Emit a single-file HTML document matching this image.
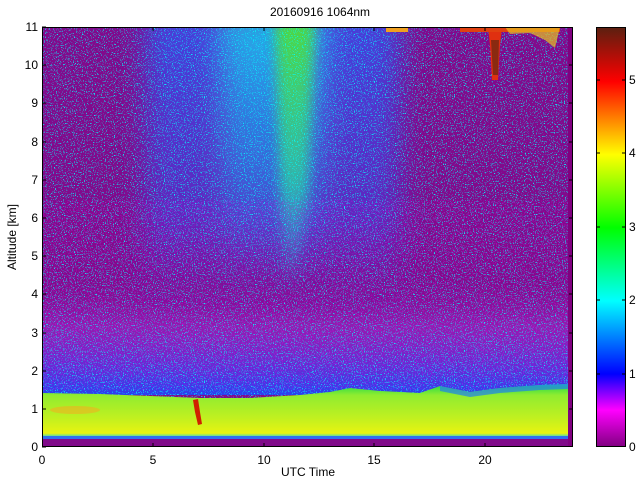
<!DOCTYPE html>
<html><head><style>
body{margin:0;background:#fff;width:640px;height:480px;overflow:hidden}
svg{display:block}
text{font-family:"Liberation Sans",sans-serif;font-size:12px;fill:#000}
</style></head><body>
<svg width="640" height="480" viewBox="0 0 640 480">
<defs>
<filter id="spk" x="0" y="0" width="100%" height="100%">
<feTurbulence type="fractalNoise" baseFrequency="0.9" numOctaves="1" seed="3" result="n"/>
<feColorMatrix in="n" type="matrix" values="0 0 0 0 0  0 0 0 0 1  0 0 0 0 1  0 0 0 22 -13.6"/>
</filter>
<filter id="spk2" x="0" y="0" width="100%" height="100%">
<feTurbulence type="fractalNoise" baseFrequency="0.85" numOctaves="1" seed="9" result="n"/>
<feColorMatrix in="n" type="matrix" values="0 0 0 0 1  0 0 0 0 0  0 0 0 0 1  0 0 0 10 -5.5"/>
</filter>
<filter id="blur" x="-30%" y="-30%" width="160%" height="160%"><feGaussianBlur stdDeviation="14"/></filter>
<filter id="blur2" x="-30%" y="-30%" width="160%" height="160%"><feGaussianBlur stdDeviation="6"/></filter>
<linearGradient id="cyanCol" x1="0" y1="0" x2="0" y2="1">
<stop offset="0" stop-color="#20c0e8" stop-opacity="0.9"/>
<stop offset="0.6" stop-color="#2090e8" stop-opacity="0.55"/>
<stop offset="1" stop-color="#3060f0" stop-opacity="0"/>
</linearGradient>
<linearGradient id="blueCol" x1="0" y1="0" x2="0" y2="1">
<stop offset="0" stop-color="#3a4ae8" stop-opacity="0.9"/>
<stop offset="0.7" stop-color="#4a3ae0" stop-opacity="0.6"/>
<stop offset="1" stop-color="#6a20c0" stop-opacity="0"/>
</linearGradient>
<linearGradient id="greenCol" x1="0" y1="0" x2="0" y2="1">
<stop offset="0" stop-color="#50d840"/>
<stop offset="0.6" stop-color="#30c8a0" stop-opacity="0.8"/>
<stop offset="1" stop-color="#20b0e0" stop-opacity="0"/>
</linearGradient>
<linearGradient id="low" x1="0" y1="0" x2="0" y2="1">
<stop offset="0" stop-color="#8a10a0" stop-opacity="0"/>
<stop offset="0.4" stop-color="#9a28c8" stop-opacity="0.6"/>
<stop offset="0.75" stop-color="#6030e0" stop-opacity="0.85"/>
<stop offset="1" stop-color="#2a40f0"/>
</linearGradient>
<linearGradient id="bl" x1="0" y1="0" x2="0" y2="1">
<stop offset="0" stop-color="#20d8a0"/>
<stop offset="0.06" stop-color="#40e040"/>
<stop offset="0.2" stop-color="#90ec30"/>
<stop offset="0.6" stop-color="#c0f020"/>
<stop offset="0.88" stop-color="#e8f410"/>
<stop offset="0.94" stop-color="#40d8c0"/>
<stop offset="1" stop-color="#3040f0"/>
</linearGradient>
<linearGradient id="cbar" x1="0" y1="1" x2="0" y2="0">
<stop offset="0" stop-color="#800080"/>
<stop offset="0.088" stop-color="#ff00ff"/>
<stop offset="0.174" stop-color="#0000ff"/>
<stop offset="0.348" stop-color="#00ffff"/>
<stop offset="0.522" stop-color="#00ff00"/>
<stop offset="0.696" stop-color="#ffff00"/>
<stop offset="0.87" stop-color="#ff0000"/>
<stop offset="1" stop-color="#5a2010"/>
</linearGradient>
<clipPath id="pc"><rect x="42" y="27" width="531" height="420"/></clipPath>
</defs>

<text x="320" y="16" text-anchor="middle">20160916 1064nm</text>

<g clip-path="url(#pc)">
<rect x="42" y="27" width="531" height="420" fill="#820a8c"/>
<rect x="42" y="280" width="531" height="115" fill="url(#low)"/>
<g filter="url(#blur)">
<rect x="145" y="10" width="255" height="300" fill="url(#blueCol)"/>
<rect x="225" y="10" width="95" height="270" fill="url(#cyanCol)"/>
</g>
<g filter="url(#blur2)">
<polygon points="276,20 314,20 308,200 296,290 284,290 280,200" fill="url(#greenCol)"/>
</g>
<rect x="42" y="27" width="531" height="420" filter="url(#spk)" opacity="0.9"/>
<rect x="42" y="200" width="531" height="190" filter="url(#spk2)" opacity="0.3"/>
<path d="M42,393 L100,394 L150,396 L200,398 L250,398 L300,395 L330,392 L350,388 L380,391 L420,393 L440,386 L470,392 L500,388 L540,385 L568,384 L568,440 L42,440 Z" fill="url(#bl)"/>
<path d="M440,386 L470,392 L500,388 L540,385 L568,384 L568,389 L540,390 L500,393 L470,397 L440,391 Z" fill="#2080f0" opacity="0.7"/>
<rect x="42" y="436" width="526" height="3" fill="#3070f0"/>
<rect x="42" y="439" width="531" height="8" fill="#800a8a"/>
<rect x="568" y="27" width="5" height="420" fill="#800080"/>
<ellipse cx="75" cy="410" rx="25" ry="4" fill="#f0b020" opacity="0.6"/>
<path d="M193,400 L198,399 L200,412 L202,424 L198,425 L195,412 Z" fill="#d02000"/>
<path d="M488,27 L502,27 L500,45 L498,80 L492,80 L490,45 Z" fill="#e03010"/>
<path d="M491,40 L499,40 L498,75 L493,75 Z" fill="#8a2a10"/>
<rect x="460" y="27" width="100" height="5" fill="#e04010"/>
<path d="M505,27 L560,27 L555,48 L545,40 L530,33 L510,34 Z" fill="#e8c020" opacity="0.7"/>
<rect x="386" y="27" width="22" height="5" fill="#f0a020"/>
</g>
<rect x="42.5" y="27.5" width="530" height="419" fill="none" stroke="#000" stroke-width="1"/>

<g stroke="#000" stroke-width="1">
<path d="M42,447h4M42,409h4M42,371h4M42,333h4M42,294h4M42,256h4M42,218h4M42,180h4M42,142h4M42,103h4M42,65h4M42,27h4"/>
<path d="M573,409h-4M573,371h-4M573,333h-4M573,294h-4M573,256h-4M573,218h-4M573,180h-4M573,142h-4M573,103h-4M573,65h-4"/>
<path d="M153,447v-4M264,447v-4M374,447v-4M485,447v-4M153,27v4M264,27v4M374,27v4M485,27v4"/>
</g>
<g text-anchor="end">
<text x="38" y="451">0</text><text x="38" y="413">1</text><text x="38" y="375">2</text>
<text x="38" y="337">3</text><text x="38" y="298">4</text><text x="38" y="260">5</text>
<text x="38" y="222">6</text><text x="38" y="184">7</text><text x="38" y="146">8</text>
<text x="38" y="107">9</text><text x="38" y="69">10</text><text x="38" y="31">11</text>
</g>
<g text-anchor="middle">
<text x="42" y="464">0</text><text x="153" y="464">5</text><text x="264" y="464">10</text>
<text x="374" y="464">15</text><text x="485" y="464">20</text>
<text x="308" y="476">UTC Time</text>
</g>
<text x="16" y="237" text-anchor="middle" transform="rotate(-90 16 237)">Altitude [km]</text>

<rect x="596" y="27" width="30" height="420" fill="url(#cbar)"/>
<rect x="596.5" y="27.5" width="29" height="419" fill="none" stroke="#000"/>
<g stroke="#000"><path d="M596,374h4M596,300h4M596,227h4M596,153h4M596,80h4M626,374h-4M626,300h-4M626,227h-4M626,153h-4M626,80h-4"/></g>
<g>
<text x="629" y="451">0</text><text x="629" y="378">1</text><text x="629" y="304">2</text>
<text x="629" y="231">3</text><text x="629" y="157">4</text><text x="629" y="84">5</text>
</g>
</svg>
</body></html>
